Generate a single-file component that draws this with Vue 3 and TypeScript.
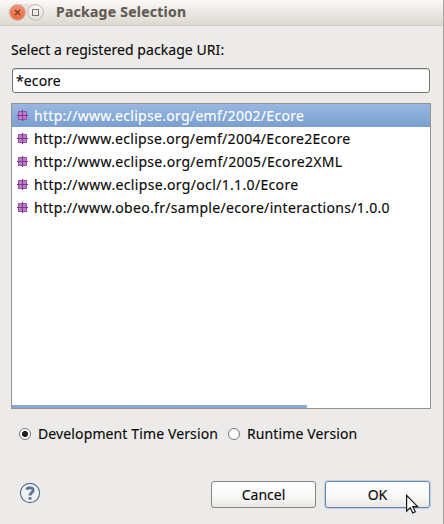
<script setup lang="ts">
import { ref } from 'vue'

interface PackageEntry {
  uri: string
  spacing: number
}

const query = ref('*ecore')
const selected = ref(0)
const version = ref<'development' | 'runtime'>('development')

const packages: PackageEntry[] = [
  { uri: 'http://www.eclipse.org/emf/2002/Ecore', spacing: 0.3 },
  { uri: 'http://www.eclipse.org/emf/2004/Ecore2Ecore', spacing: 0.3 },
  { uri: 'http://www.eclipse.org/emf/2005/Ecore2XML', spacing: 0.32 },
  { uri: 'http://www.eclipse.org/ocl/1.1.0/Ecore', spacing: 0.34 },
  { uri: 'http://www.obeo.fr/sample/ecore/interactions/1.0.0', spacing: 0.32 },
]
</script>

<template>
  <div class="dialog">
    <header class="titlebar">
      <svg class="controls" width="38" height="22" viewBox="0 0 38 22">
        <defs>
          <linearGradient id="close" x1="0" y1="0" x2="0" y2="1">
            <stop offset="0" stop-color="#f29878" />
            <stop offset="0.5" stop-color="#f07850" />
            <stop offset="1" stop-color="#ee6e42" />
          </linearGradient>
          <linearGradient id="maximise" x1="0" y1="0" x2="0" y2="1">
            <stop offset="0" stop-color="#fbfaf8" />
            <stop offset="1" stop-color="#e3dfd9" />
          </linearGradient>
        </defs>
        <rect x="1" y="2" width="36" height="18" rx="9" fill="#e5e1dc" />
        <circle cx="10.5" cy="10.5" r="7.8" fill="url(#close)" stroke="#c9a595" />
        <path d="M8 8l5 5M13 8l-5 5" stroke="#71402e" stroke-width="1.3" />
        <circle cx="28.5" cy="10.5" r="7.8" fill="url(#maximise)" stroke="#bfb9b2" />
        <rect x="25.5" y="7.5" width="6" height="6" fill="none" stroke="#77736c" />
      </svg>
      <h1 class="title">Package Selection</h1>
    </header>

    <main class="content">
      <label class="prompt" for="query">Select a registered package URI:</label>
      <input id="query" v-model="query" class="field" type="text" />

      <div class="list">
        <ul class="rows">
          <li
            v-for="(item, i) in packages"
            :key="item.uri"
            class="row"
            :class="{ selected: selected === i }"
            @click="selected = i"
          >
            <svg class="package" width="12" height="12" viewBox="0 0 12 12">
              <path d="M5.5 0v11M0 5.5h11" stroke="#5f2d70" />
              <rect x="1" y="1" width="9" height="9" rx="0.6" fill="#9a4fac" />
              <path d="M2 2h3v3h-3zM6 2h3v3h-3zM2 6h3v3h-3zM6 6h3v3h-3z" fill="#bb7cc8" />
              <path d="M5.5 1v9M1 5.5h9" stroke="#7f3a90" />
            </svg>
            <span class="uri" :style="{ letterSpacing: item.spacing + 'px' }">{{ item.uri }}</span>
          </li>
        </ul>
        <div class="scrollbar"></div>
      </div>

      <div class="versions">
        <label class="choice development">
          <input v-model="version" class="radio" type="radio" value="development" />
          <span>Development Time Version</span>
        </label>
        <label class="choice runtime">
          <input v-model="version" class="radio" type="radio" value="runtime" />
          <span>Runtime Version</span>
        </label>
      </div>

      <footer class="actions">
        <svg class="help" width="22" height="22" viewBox="0 0 22 22">
          <circle cx="11" cy="11" r="9.6" fill="#f1f2f3" stroke="#566c91" stroke-width="1.1" />
          <path d="M7.3 7.4C8.8 5.4 14.2 4.9 14.2 8.3C14.2 10.8 11 10.6 11 13.6" fill="none" stroke="#60759a" stroke-width="2.9" />
          <rect x="9.4" y="15" width="3.2" height="2.8" rx="1.1" fill="#60759a" />
        </svg>
        <button class="button cancel" type="button"><span>Cancel</span></button>
        <button class="button ok" type="button"><span>OK</span></button>
      </footer>
    </main>

    <svg class="pointer" width="15" height="22" viewBox="0 0 15 22">
      <path d="M1.6 1.4v15.8l3.6-3.4 2.6 5.2 2.5-1.2-2.5-5.1h4.8z" fill="#fff" stroke="#151515" stroke-width="1.2" />
    </svg>
  </div>
</template>

<style>
body {
  margin: 0;
}
</style>

<style scoped>
.dialog {
  position: relative;
  box-sizing: border-box;
  width: 444px;
  height: 524px;
  overflow: hidden;
  border-right: 1px solid #aaa6a2;
  background: #edebe9;
  color: #0a0a0a;
  font: 14px/20px "Noto Sans", sans-serif;
  -webkit-text-stroke: 0.15px currentColor;
}

.titlebar {
  box-sizing: border-box;
  display: flex;
  height: 26px;
  padding: 2px 0 0 7px;
  border-bottom: 1px solid #d2cac0;
  background: linear-gradient(#faf9f8, #ddd8d1);
}

.controls {
  flex: none;
}

.title {
  margin: 0 0 0 11px;
  color: #625b53;
  font-size: 14px;
  font-weight: 700;
  letter-spacing: 0.25px;
  line-height: 20px;
  white-space: nowrap;
}

.content {
  display: flex;
  flex-direction: column;
  padding: 14px 12px 0 11px;
}

.prompt {
  height: 20px;
  margin-bottom: 8px;
  letter-spacing: 0.07px;
  white-space: nowrap;
}

.field {
  box-sizing: border-box;
  width: 418px;
  height: 25px;
  margin-left: 1px;
  padding: 0 3px;
  border: 1px solid #77736f;
  border-radius: 3px;
  outline: none;
  background: #fff;
  box-shadow: inset 0 1px 1px #ddd;
  color: inherit;
  font: inherit;
  letter-spacing: 0.1px;
}

.list {
  box-sizing: border-box;
  display: flex;
  flex-direction: column;
  justify-content: space-between;
  width: 420px;
  height: 306px;
  margin-top: 10px;
  border: 1px solid #969491;
  background: #fff;
}

.rows {
  margin: 0;
  padding: 0;
  list-style: none;
}

.row {
  display: flex;
  align-items: center;
  height: 23px;
  padding-left: 5px;
}

.row.selected {
  background: linear-gradient(#98b8e1, #799fd0);
  color: #fff;
}

.package {
  flex: none;
  margin-right: 5px;
}

.uri {
  white-space: nowrap;
}

.scrollbar {
  width: 295px;
  height: 3px;
  background: #86a9d7;
}

.versions {
  display: flex;
  height: 20px;
  margin: 15px 0 0 8px;
}

.choice {
  display: flex;
  align-items: center;
  letter-spacing: 0.12px;
  white-space: nowrap;
}

.development {
  width: 209px;
}

.radio {
  flex: none;
  box-sizing: border-box;
  width: 12px;
  height: 12px;
  margin: 0 7px 0 0;
  appearance: none;
  border: 1px solid #7b7875;
  border-radius: 50%;
  background: #fff;
}

.radio:checked {
  background: radial-gradient(circle, #222 0 2.7px, #fff 3.5px);
}

.actions {
  display: flex;
  align-items: center;
  margin-top: 37px;
}

.help {
  flex: none;
  margin: -3px 170px 0 8px;
}

.button {
  box-sizing: border-box;
  flex: none;
  width: 105px;
  height: 27px;
  padding: 0;
  border: 1px solid #898683;
  border-radius: 3px;
  background: linear-gradient(#fff, #f8f8f7 60%, #e9e7e5);
  color: inherit;
  font: inherit;
}

.ok {
  margin-left: 9px;
  border-color: #6687b5;
  box-shadow: 0 0 0 1px #c2d0e3;
}

.pointer {
  position: absolute;
  left: 405px;
  top: 494px;
}
</style>
